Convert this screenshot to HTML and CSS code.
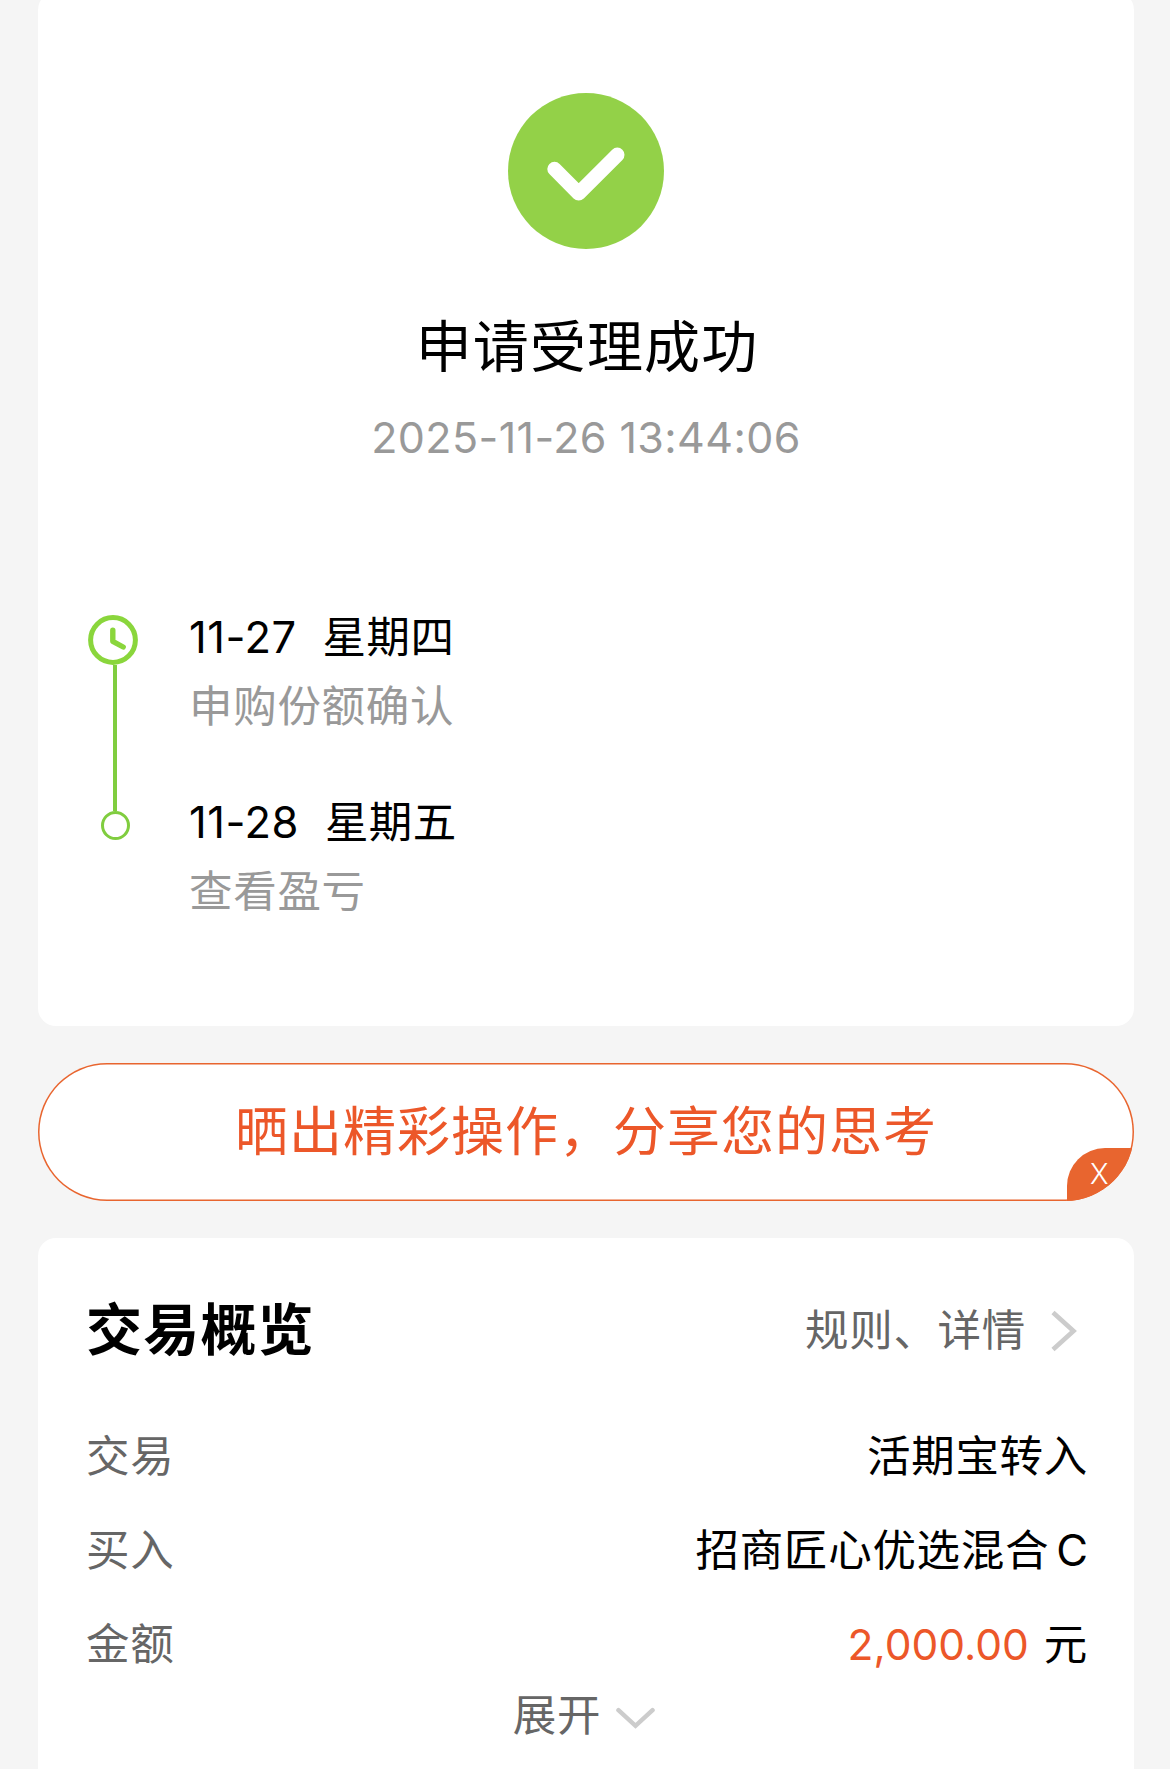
FILE: index.html
```html
<!DOCTYPE html>
<html lang="zh-CN">
<head>
  <meta charset="UTF-8">
  <meta name="viewport" content="width=device-width, initial-scale=1.0">
  <title>申请受理成功</title>
  <link rel="stylesheet" href="styles.css">
</head>
<body>
  <div class="card result">
    <svg class="result-icon" viewBox="0 0 156 156">
      <circle cx="78" cy="78" r="78" fill="#93d148"/>
      <path d="M46.5 76 L70.7 100.4 L109.3 61.8" fill="none" stroke="#fff" stroke-width="14.4" stroke-linecap="round" stroke-linejoin="round"/>
    </svg>
    <h1 class="result-title">申请受理成功</h1>
    <p class="result-time">2025-11-26 13:44:06</p>

    <div class="timeline">
      <div class="step">
        <div class="step-mark">
          <svg class="step-clock" viewBox="0 0 50 50">
            <circle cx="25" cy="25" r="22.4" fill="none" stroke="#8ad63c" stroke-width="5"/>
            <path d="M24.8 15.2 V26.3 L35.2 32" fill="none" stroke="#8ad63c" stroke-width="5.4" stroke-linecap="round" stroke-linejoin="round"/>
          </svg>
          <div class="step-line"></div>
        </div>
        <div class="step-text">
          <p class="step-date"><span>11-27</span><span>星期四</span></p>
          <p class="step-desc">申购份额确认</p>
        </div>
      </div>
      <div class="step">
        <div class="step-mark">
          <div class="step-dot"></div>
        </div>
        <div class="step-text">
          <p class="step-date"><span>11-28</span><span>星期五</span></p>
          <p class="step-desc">查看盈亏</p>
        </div>
      </div>
    </div>
  </div>

  <div class="share">
    <span class="share-text">晒出精彩操作，分享您的思考</span>
    <span class="share-close">X</span>
  </div>

  <div class="card overview">
    <div class="overview-head">
      <h2 class="overview-title">交易概览</h2>
      <a class="overview-link">
        <span>规则、详情</span>
        <svg class="arrow-right" viewBox="0 0 26 42">
          <path d="M2 2.5 L22.5 21 L2 39.5" fill="none" stroke="#ccc" stroke-width="4.6"/>
        </svg>
      </a>
    </div>
    <div class="row">
      <span class="row-label">交易</span>
      <span class="row-value">活期宝转入</span>
    </div>
    <div class="row">
      <span class="row-label">买入</span>
      <span class="row-value">招商匠心优选混合<span class="latin">C</span></span>
    </div>
    <div class="row">
      <span class="row-label">金额</span>
      <span class="row-value"><span class="amount">2,000.00</span>元</span>
    </div>
    <div class="more">
      <span>展开</span>
      <svg class="arrow-down" viewBox="0 0 40 23">
        <path d="M2.5 3 L20 19 L37.5 3" fill="none" stroke="#ccc" stroke-width="4.6" stroke-linecap="round"/>
      </svg>
    </div>
  </div>
</body>
</html>
```
FILE: styles.css
```css
body {
  margin: 0;
  padding: 0 36px 0 38px;
  background-color: #f5f5f5;
  font-family: Inter, "Noto Sans CJK SC", sans-serif;
  font-size: 43.5px;
  letter-spacing: 0.7px;
  color: #000;
  overflow-x: hidden;
}
h1, h2, p {
  margin: 0;
  font-weight: 400;
}
svg {
  display: block;
  flex: none;
}
.card {
  background-color: #fff;
  border-radius: 18px;
}

/* result */
.result {
  margin-top: -8px;
  padding: 101px 50px 107px;
}
.result-icon {
  width: 156px;
  height: 156px;
  margin: 0 auto;
}
.result-title {
  margin-top: 63px;
  padding-left: 2px;
  font-size: 56px;
  line-height: 70px;
  letter-spacing: 1.1px;
  text-align: center;
}
.result-time {
  margin-top: 25px;
  line-height: 60px;
  font-size: 43px;
  letter-spacing: 0.4px;
  text-align: center;
  color: #999;
}

/* timeline */
.timeline {
  margin-top: 140px;
}
.step {
  display: flex;
}
.step + .step {
  margin-top: 56px;
}
.step-mark {
  display: flex;
  flex-direction: column;
  width: 101px;
}
.step-clock {
  width: 50px;
  height: 50px;
  margin-top: 8px;
}
.step-line {
  flex: 1;
  width: 4px;
  margin: 0 0 -75px 25px;
  background-color: #80cd3f;
}
.step-dot {
  box-sizing: border-box;
  width: 29px;
  height: 29px;
  margin: 19px 0 0 13px;
  border: 3px solid #80cd3f;
  border-radius: 50%;
}
.step-date {
  display: flex;
  gap: 26px;
  line-height: 60px;
  letter-spacing: 0.5px;
}
.step-desc {
  margin-top: 9px;
  line-height: 60px;
  color: #999;
}
.step:last-child .step-desc {
  margin-bottom: -2px;
}

/* share banner */
.share {
  position: relative;
  display: flex;
  align-items: center;
  justify-content: center;
  height: 138px;
  margin: 37px 0;
  border-radius: 69px;
  background-color: #fff;
  box-shadow: inset 0 0 0 1.5px #e8652f;
  overflow: hidden;
}
.share-text {
  font-size: 53px;
  line-height: 140px;
  letter-spacing: 1px;
  color: #ec5729;
}
.share-close {
  position: absolute;
  right: 0;
  bottom: 0;
  box-sizing: border-box;
  width: 67px;
  height: 53px;
  padding-right: 2px;
  border-top-left-radius: 38px;
  background-color: #e8652f;
  font-size: 28px;
  font-weight: 300;
  line-height: 53px;
  text-align: center;
  color: #fff;
}

/* overview */
.overview {
  padding: 57px 47px 29px 48px;
  border-radius: 18px 18px 0 0;
}
.overview-head {
  display: flex;
  align-items: center;
  justify-content: space-between;
  margin-bottom: 44px;
}
.overview-title {
  font-size: 56px;
  font-weight: 700;
  line-height: 70px;
  letter-spacing: 1.2px;
}
.overview-link {
  display: flex;
  align-items: center;
  gap: 25px;
  padding-right: 10px;
  line-height: 70px;
  color: #666;
}
.arrow-right {
  width: 26px;
  height: 42px;
  margin-top: 2px;
}
.row {
  display: flex;
  justify-content: space-between;
  line-height: 94px;
}
.row-label {
  color: #666;
}
.latin {
  margin-left: 7px;
  letter-spacing: 0;
}
.row-value {
  margin-right: -1px;
}
.amount {
  margin-right: 15px;
  font-size: 42.5px;
  letter-spacing: 0;
  color: #ec5729;
}
.more {
  display: flex;
  align-items: center;
  justify-content: center;
  gap: 15px;
  margin-top: -2px;
  padding-right: 5px;
  line-height: 50px;
  color: #666;
}
.arrow-down {
  width: 39px;
  height: 23px;
  margin-top: 6px;
}
```
